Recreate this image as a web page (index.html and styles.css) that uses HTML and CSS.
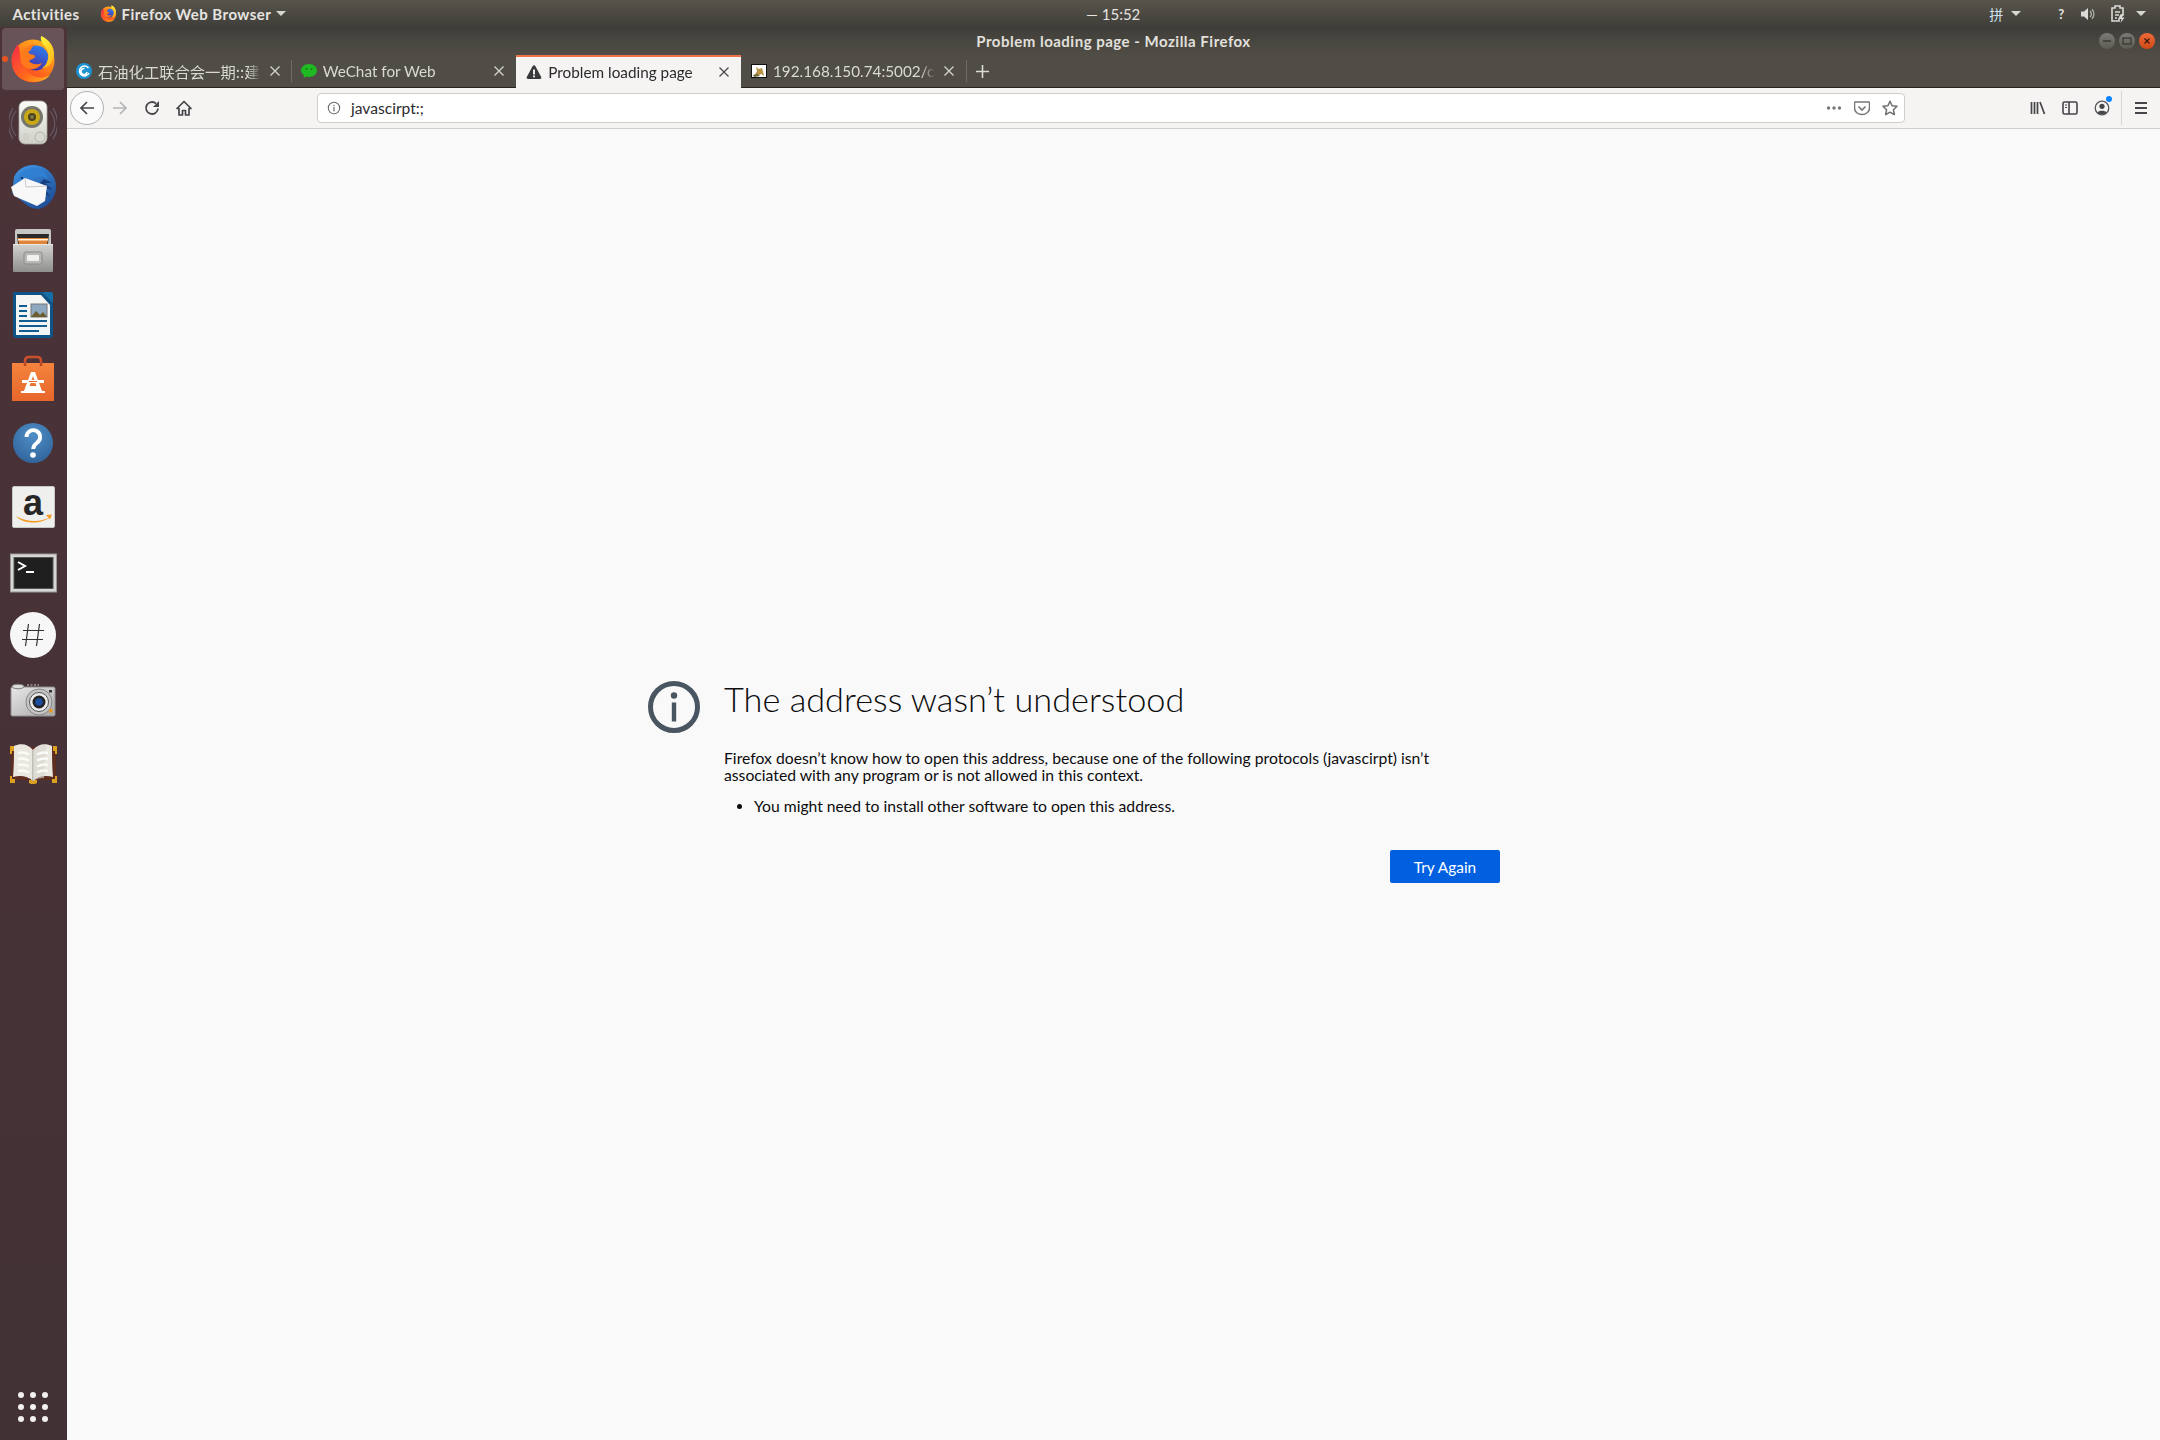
FILE: index.html
```html
<!DOCTYPE html>
<html lang="en">
<head>
<meta charset="utf-8">
<title>Problem loading page - Mozilla Firefox</title>
<link rel="stylesheet" href="styles.css">
</head>
<body>
<svg class="defs" aria-hidden="true">
  <defs>
    <linearGradient id="ffBody" x1="0.85" y1="0.1" x2="0.3" y2="1"><stop offset="0" stop-color="#ffb020"/><stop offset="0.5" stop-color="#ff7a18"/><stop offset="1" stop-color="#f9302c"/></linearGradient>
    <linearGradient id="ffLeft" x1="0" y1="0" x2="1" y2="1"><stop offset="0" stop-color="#f6284a"/><stop offset="0.6" stop-color="#ff6a1a"/><stop offset="1" stop-color="#ffb51f"/></linearGradient>
    <linearGradient id="ffGlobe" x1="0.7" y1="0" x2="0.3" y2="1"><stop offset="0" stop-color="#2d7ff0"/><stop offset="1" stop-color="#4a2aa0"/></linearGradient>
    <linearGradient id="ffTail" x1="0.2" y1="0" x2="0.8" y2="1"><stop offset="0" stop-color="#fff23a"/><stop offset="1" stop-color="#ffb31a"/></linearGradient>
    <linearGradient id="bagG" x1="0" y1="0" x2="0" y2="1"><stop offset="0" stop-color="#f3843e"/><stop offset="1" stop-color="#e8662a"/></linearGradient>
    <linearGradient id="metalG" x1="0" y1="0" x2="0" y2="1"><stop offset="0" stop-color="#d2d2d0"/><stop offset="1" stop-color="#8f8f8d"/></linearGradient>
    <linearGradient id="camG" x1="0" y1="0" x2="1" y2="1"><stop offset="0" stop-color="#e8e8e8"/><stop offset="1" stop-color="#a8a8a8"/></linearGradient>
    <linearGradient id="spkG" x1="0" y1="0" x2="0" y2="1"><stop offset="0" stop-color="#fbfbf8"/><stop offset="1" stop-color="#cfcfc8"/></linearGradient>
    <linearGradient id="birdG" x1="0.2" y1="0" x2="0.8" y2="1"><stop offset="0" stop-color="#3f93e4"/><stop offset="1" stop-color="#1c4a92"/></linearGradient>
    <radialGradient id="helpG" cx="0.5" cy="0.3" r="0.8"><stop offset="0" stop-color="#4f8fc6"/><stop offset="1" stop-color="#2c5f96"/></radialGradient>
    <symbol id="firefox" viewBox="0 0 48 48">
      <circle cx="24" cy="26" r="21.500" fill="url(#ffBody)"/>
      <path d="M9 9C3 16 1.500 26 4 33c3 9 11 14 20 14 9 0 14-3 17-7-7 4-15 3-21-2-6-5-8-12-3-17-3 0-5 1-6 2 0-4 0-9-2-14z" fill="url(#ffLeft)"/>
      <circle cx="27" cy="23" r="12.500" fill="url(#ffGlobe)"/>
      <path d="M15 15c3-4 8-6 12-6-3 2-5 4-5 6-3 1-3 3-1 4 3 1 6 1 5 3-1 2-4 2-6 4 3 4 9 4 13 2-3 6-11 8-17 4-6-4-6-12-1-17z" fill="#ff7a1c"/>
      <path d="M32 1c-1 5 2 8 5 12 3 4 3 9 1 14-1 3-3 5-5 6 6 0 11-5 12-12C46 12 40 4 32 1z" fill="url(#ffTail)"/>
    </symbol>
  </defs>
</svg>

<header class="topbar">
  <div class="top-left">
    <span class="top-label activities">Activities</span>
    <span class="top-app">
      <svg class="top-ff"><use href="#firefox"/></svg>
      <span class="top-label">Firefox Web Browser</span>
      <span class="caret"></span>
    </span>
  </div>
  <div class="clock">— 15:52</div>
  <div class="top-right">
    <span class="tray-pin">拼</span><span class="caret caret-pin"></span>
    <span class="tray-q">?</span>
    <svg class="tray-vol" viewBox="0 0 16 16"><path d="M1 5.500h3L8 2v12l-4-3.500H1z" fill="#dcdad6"/><path d="M10 5a4 4 0 0 1 0 6M12 3.200a7 7 0 0 1 0 9.600" fill="none" stroke="#dcdad6" stroke-width="1.300" opacity=".7"/></svg>
    <svg class="tray-clip" viewBox="0 0 16 18"><path d="M2 3h3V1h5v2h3v7h-2l-2 4v2H2z" fill="none" stroke="#dcdad6" stroke-width="1.600"/><path d="M5 7h5M5 10h4M5 13h2" stroke="#dcdad6" stroke-width="1.400"/><path d="M12 9l-3 5h2.500l-1 4 4-5.500h-2.500l1.500-3.500z" fill="#dcdad6"/></svg>
    <span class="caret caret-end"></span>
  </div>
</header>

<div class="desktop">
  <nav class="dock">
    <div class="dock-item active">
      <span class="run-dot"></span>
      <svg class="dock-icon"><use href="#firefox"/></svg>
    </div>
    <div class="dock-item">
      <svg class="dock-icon" viewBox="0 0 48 48">
        <path d="M7 12C1 20 1 29 7 37M41 12c6 8 6 17 0 25M4 9c-6 10-6 21 0 31M44 9c6 10 6 21 0 31" fill="none" stroke="#7a7486" stroke-width="1.200" opacity=".6"/>
        <rect x="10" y="2" width="28" height="43" rx="6" fill="url(#spkG)" stroke="#aaa9a2" stroke-width=".8"/>
        <circle cx="23" cy="18" r="11" fill="#77766c"/>
        <circle cx="23" cy="18" r="8" fill="#c9a815"/>
        <circle cx="23" cy="18" r="4" fill="#4b4326"/>
        <circle cx="23" cy="18" r="1.800" fill="#8c8240"/>
        <circle cx="31" cy="38" r="5" fill="#d8d8d2" stroke="#b5b5ae"/>
        <rect x="15" y="35" width="4" height="5" rx="1" fill="none" stroke="#c8c8c0"/>
      </svg>
    </div>
    <div class="dock-item">
      <svg class="dock-icon" viewBox="0 0 48 48">
        <path d="M24 2c12 0 23 9 23 22 0 11-9 21-18 22-3 0-7-1-10-3L3 30 5 14C8 7 15 2 24 2z" fill="url(#birdG)"/>
        <path d="M35 16l8 4-7 0 8 7-8-2 5 9-7-5 2 9-6-7-3 7V24z" fill="#173e80"/>
        <path d="M8 20C9 10 17 4 25 5c7 1 12 5 14 11-5-3-10-3-14-2-6 1-12 3-17 6z" fill="#2f7fd2"/>
        <circle cx="13" cy="15" r="1.100" fill="#0c2348"/>
        <path d="M2 24l14-9 22 8-2 15-8 5L5 33z" fill="#f8f8f8"/>
        <path d="M16 15l1 9 21-1" fill="none" stroke="#c3c8ce" stroke-width="1"/>
      </svg>
    </div>
    <div class="dock-item">
      <svg class="dock-icon" viewBox="0 0 48 48">
        <path d="M6 4q0-2 2-2h32q2 0 2 2v16H6z" fill="#c6c6c4"/>
        <path d="M8 7h32l-1 10H9z" fill="#2c2a28"/>
        <path d="M9 11h30l-1 7H10z" fill="#e0843a"/>
        <path d="M9 12h30v1.500H9z" fill="#fff1d8"/>
        <path d="M4 17h40v27q0 1-1 1H5q-1 0-1-1z" fill="url(#metalG)"/>
        <path d="M4 17h40v1H4z" fill="#e8e8e6"/>
        <rect x="15" y="25" width="18" height="12" rx="2" fill="#b8b8b6" stroke="#8a8a88"/>
        <rect x="18" y="28" width="12" height="6" rx="1" fill="#f0f0ee"/>
      </svg>
    </div>
    <div class="dock-item">
      <svg class="dock-icon" viewBox="0 0 48 48">
        <path d="M4 1h29l11 11v32q0 3-3 3H7q-3 0-3-3z" fill="#0f5486"/>
        <path d="M33 1h9q2 0 2 2v9z" fill="#1670a8"/>
        <path d="M7 4h25l9 10v30H7z" fill="#f4f5f5"/>
        <path d="M10 15h8M10 20h8M10 25h8M10 30h28M10 35h28M10 40h20" stroke="#125d92" stroke-width="2"/>
        <rect x="22" y="13" width="16" height="13" fill="#8da7be" stroke="#777"/>
        <path d="M22 26l5-6 4 4 3-3 4 5z" fill="#6c5d30"/>
      </svg>
    </div>
    <div class="dock-item">
      <svg class="dock-icon" viewBox="0 0 48 48">
        <path d="M16 11V6q0-4 4-4h8q4 0 4 4v5" fill="none" stroke="#c9502a" stroke-width="2.500"/>
        <path d="M3 8h42v38H3z" fill="url(#bagG)"/>
        <path d="M16 11v-3M32 11v-3" stroke="#b8461f" stroke-width="2.500"/>
        <path d="M22 17h4l7 19h3v2H12v-2h3zM24 21l-3.500 10h7z" fill="#fff" fill-rule="evenodd"/>
        <rect x="13" y="25" width="22" height="3" fill="#fff"/>
        <rect x="20" y="26" width="8" height="1" fill="#e8662a"/>
      </svg>
    </div>
    <div class="dock-item">
      <svg class="dock-icon" viewBox="0 0 48 48">
        <circle cx="24" cy="24" r="20" fill="url(#helpG)"/>
        <path d="M17.500 18a6.800 6.800 0 1 1 10.500 5.700c-2.700 1.900-3.800 3-3.800 6.300" fill="none" stroke="#fff" stroke-width="3.800"/>
        <circle cx="24" cy="36" r="2.800" fill="#fff"/>
      </svg>
    </div>
    <div class="dock-item">
      <svg class="dock-icon" viewBox="0 0 48 48">
        <rect x="3.500" y="3.500" width="42" height="41" rx="1.500" fill="#efefee" stroke="#c8c8c6"/>
        <text class="amazon-a" x="24" y="32" text-anchor="middle">a</text>
        <path d="M7 33c10 6 24 7 34 1-7 7-27 8-34-1z" fill="#f59a23"/>
        <path d="M37 32l6-.500-2 5z" fill="#f59a23"/>
      </svg>
    </div>
    <div class="dock-item">
      <svg class="dock-icon" viewBox="0 0 48 48">
        <rect x="1.500" y="7" width="46" height="38" fill="#d6d6d4" stroke="#999"/>
        <rect x="5" y="10.500" width="39" height="31" fill="#1f1f1f" stroke="#555"/>
        <path d="M9 15l7 4-7 4" fill="none" stroke="#fff" stroke-width="2"/>
        <rect x="17" y="24" width="8" height="2" fill="#fff"/>
      </svg>
    </div>
    <div class="dock-item">
      <svg class="dock-icon" viewBox="0 0 48 48">
        <circle cx="24" cy="24" r="23" fill="#f7f7f7"/>
        <path d="M19.500 13l-3 22M30.500 13l-3 22M14 19.500h21M13 28.500h21" stroke="#333" stroke-width="1.200" fill="none"/>
      </svg>
    </div>
    <div class="dock-item">
      <svg class="dock-icon" viewBox="0 0 48 48">
        <rect x="2" y="12" width="44" height="29" rx="1.500" fill="url(#camG)" stroke="#8f8f8f"/>
        <ellipse cx="9" cy="11.500" rx="6" ry="2.300" fill="#dcdcdc" stroke="#777"/>
        <path d="M18 10h12" stroke="#999" stroke-dasharray="2 1.500" stroke-width="1.500"/>
        <circle cx="30" cy="27" r="13" fill="#c4c4c4" stroke="#888"/>
        <circle cx="30" cy="27" r="9.500" fill="#ececec" stroke="#555"/>
        <circle cx="30" cy="27" r="6.500" fill="#222"/>
        <circle cx="30" cy="27" r="3.800" fill="#1c4da0"/>
        <rect x="40" y="34" width="3.500" height="3.500" fill="#e39a28"/>
        <rect x="40" y="15" width="3" height="2.500" fill="#333"/>
      </svg>
    </div>
    <div class="dock-item">
      <svg class="dock-icon" viewBox="0 0 48 48">
        <rect x="2" y="8" width="45" height="33" fill="#5d2d20"/>
        <path d="M1 7h4v5H3v3H1zM48 7h-4v5h2v3h2zM1 37h2v3h3v4H1zM48 37h-2v3h-3v4h5zM20 41h8v3l-2 1h-4l-2-1z" fill="#dd9f1e"/>
        <path d="M24 11C19 5 12 4 5 7c0 10 0 20-1 31 7-2 15-1 20 4 5-5 13-6 20-4-1-11-1-21-1-31-7-3-14-2-19 4z" fill="#e9e7e0"/>
        <path d="M24 11v31" stroke="#97948a"/>
        <path d="M24 11c4-4 9-5 13-5l-2 33c-4 0-8 1-11 3z" fill="#d9d6cd" opacity=".6"/>
        <path d="M9 14c4-1 8 0 11 1.500M9 20c4-1 8 0 11 1.500M9 26c4-1 8 0 11 1.500M9 32c4-1 8 0 11 1.500M39 14c-4-1-8 0-11 1.500M39 20c-4-1-8 0-11 1.500M39 26c-4-1-8 0-11 1.500M39 32c-4-1-8 0-11 1.500" stroke="#fafaf6" stroke-width="2.500" fill="none"/>
      </svg>
    </div>
    <div class="dock-apps">
      <i></i><i></i><i></i><i></i><i></i><i></i><i></i><i></i><i></i>
    </div>
  </nav>

  <div class="browser">
    <div class="titlebar">
      <span></span>
      <div class="win-title">Problem loading page - Mozilla Firefox</div>
      <div class="win-btns">
        <span class="win-btn"><svg viewBox="0 0 16 16"><path d="M4 8h8" stroke="#38362f" stroke-width="1.400"/></svg></span>
        <span class="win-btn"><svg viewBox="0 0 16 16"><rect x="4" y="5" width="8" height="6" fill="none" stroke="#38362f" stroke-width="1.200"/></svg></span>
        <span class="win-btn close"><svg viewBox="0 0 16 16"><path d="M5.500 5.500l5 5M10.500 5.500l-5 5" stroke="#3b1a0d" stroke-width="1.300"/></svg></span>
      </div>
    </div>

    <div class="tabstrip">
      <div class="tab sep">
        <svg class="favicon" viewBox="0 0 16 16"><circle cx="8" cy="8" r="8" fill="#1c92d2"/><path d="M12.500 5A5 5 0 1 0 13 10M11 9a3 3 0 1 1-2.500-3.500" fill="none" stroke="#fff" stroke-width="1.500"/></svg>
        <span class="tab-label cjk">石油化工联合会一期::建筑</span>
        <svg class="tab-close" viewBox="0 0 16 16"><path d="M3.500 3.500l9 9M12.500 3.500l-9 9" stroke="#d6d4d0" stroke-width="1.300"/></svg>
      </div>
      <div class="tab">
        <svg class="favicon" viewBox="0 0 16 16"><path d="M8 1c4.400 0 8 2.900 8 6.500S12.400 14 8 14c-1 0-2-.2-2.800-.4L2.500 15l.6-2.800C1.200 11 0 9.400 0 7.500 0 3.900 3.600 1 8 1z" fill="#1fb922"/><circle cx="5.500" cy="6" r="1" fill="#137d18"/><circle cx="10.500" cy="6" r="1" fill="#137d18"/></svg>
        <span class="tab-label">WeChat for Web</span>
        <svg class="tab-close" viewBox="0 0 16 16"><path d="M3.500 3.500l9 9M12.500 3.500l-9 9" stroke="#d6d4d0" stroke-width="1.300"/></svg>
      </div>
      <div class="tab selected">
        <svg class="favicon" viewBox="0 0 16 16"><path d="M8 1.200c.5 0 1 .3 1.300.8l5.900 11c.5 1-.2 2-1.300 2H2.100c-1.100 0-1.800-1-1.300-2l5.900-11c.3-.5.800-.8 1.300-.8z" fill="#38383d"/><rect x="7.100" y="5.500" width="1.800" height="5" fill="#fff"/><rect x="7.100" y="11.500" width="1.800" height="1.800" fill="#fff"/></svg>
        <span class="tab-label">Problem loading page</span>
        <svg class="tab-close" viewBox="0 0 16 16"><path d="M3.500 3.500l9 9M12.500 3.500l-9 9" stroke="#4a4a4f" stroke-width="1.300"/></svg>
      </div>
      <div class="tab">
        <svg class="favicon" viewBox="0 0 16 16"><rect x=".5" y="1.500" width="15" height="13" fill="#fff" stroke="#111"/><path d="M3 13l3-5-1-4 3 2 3-1 1 3 1 5-3-2-3 2z" fill="#b89448"/><path d="M2 12l4-1 3 2-6 1z" fill="#6d6a3a"/></svg>
        <span class="tab-label">192.168.150.74:5002/cpc</span>
        <svg class="tab-close" viewBox="0 0 16 16"><path d="M3.500 3.500l9 9M12.500 3.500l-9 9" stroke="#d6d4d0" stroke-width="1.300"/></svg>
      </div>
      <div class="new-tab">
        <svg viewBox="0 0 16 16"><path d="M8 1v14M1 8h14" stroke="#dcdad6" stroke-width="1.700"/></svg>
      </div>
    </div>

    <div class="toolbar">
      <div class="nav-back">
        <svg viewBox="0 0 16 16"><path d="M15 8H2M8 2L2 8l6 6" fill="none" stroke="#45454a" stroke-width="1.700"/></svg>
      </div>
      <div class="tool">
        <svg viewBox="0 0 16 16"><path d="M1 8h13M8 2l6 6-6 6" fill="none" stroke="#b4b4b6" stroke-width="1.700"/></svg>
      </div>
      <div class="tool">
        <svg viewBox="0 0 16 16"><path d="M14 8.500A6 6 0 1 1 12 3.500" fill="none" stroke="#45454a" stroke-width="1.800"/><path d="M15 1v6H9z" fill="#45454a"/></svg>
      </div>
      <div class="tool">
        <svg viewBox="0 0 16 16"><path d="M8 1.500L1 8.500h2V15h3.500v-4.500h3V15H13V8.500h2z" fill="none" stroke="#45454a" stroke-width="1.700" stroke-linejoin="round"/></svg>
      </div>
      <div class="urlbar">
        <svg class="url-info" viewBox="0 0 16 16"><circle cx="8" cy="8" r="6.500" fill="none" stroke="#6a6a6e" stroke-width="1.200"/><rect x="7.300" y="7" width="1.400" height="4.800" fill="#6a6a6e"/><rect x="7.300" y="4.400" width="1.400" height="1.500" fill="#6a6a6e"/></svg>
        <span class="url-text">javascirpt:;</span>
        <div class="url-actions">
          <svg class="url-act" viewBox="0 0 16 16"><circle cx="2.500" cy="8" r="1.700" fill="#77777a"/><circle cx="8" cy="8" r="1.700" fill="#77777a"/><circle cx="13.500" cy="8" r="1.700" fill="#77777a"/></svg>
          <svg class="url-act" viewBox="0 0 16 16"><path d="M1 2h14q.5 0 .5.500V8c0 4-3.500 6.500-7.500 6.500S.5 12 .5 8V2.500Q.5 2 1 2z" fill="none" stroke="#77777a" stroke-width="1.500"/><path d="M4.500 6.500L8 10l3.500-3.500" fill="none" stroke="#77777a" stroke-width="1.700"/></svg>
          <svg class="url-act star" viewBox="0 0 16 16"><path d="M8 1.200l2.100 4.500 4.900.6-3.600 3.400.9 4.900L8 12.200l-4.300 2.400.9-4.900L1 6.300l4.900-.6z" fill="none" stroke="#6e6e72" stroke-width="1.500" stroke-linejoin="round"/></svg>
        </div>
      </div>
      <div class="tool">
        <svg viewBox="0 0 16 16"><path d="M1.500 2v12M4.500 2v12M7.500 2v12M10 2l4.500 12" fill="none" stroke="#45454a" stroke-width="1.700"/></svg>
      </div>
      <div class="tool">
        <svg viewBox="0 0 16 16"><rect x="1" y="2" width="14" height="12" rx="1.500" fill="none" stroke="#45454a" stroke-width="1.600"/><path d="M7 2v12" stroke="#45454a" stroke-width="1.600"/><path d="M3 5h2M3 7.500h2" stroke="#45454a" stroke-width="1"/></svg>
      </div>
      <div class="tool account">
        <svg viewBox="0 0 16 16"><circle cx="8" cy="8" r="6.800" fill="none" stroke="#55555a" stroke-width="1.300"/><circle cx="8" cy="6.300" r="2.600" fill="#45454a"/><path d="M3.500 12.500c1-2.500 8-2.500 9 0-2 2-7 2-9 0z" fill="#45454a"/></svg>
        <span class="badge"></span>
      </div>
      <div class="tool-sep"></div>
      <div class="tool">
        <svg viewBox="0 0 16 16"><path d="M2 3h12M2 8h12M2 13h12" stroke="#45454a" stroke-width="1.800"/></svg>
      </div>
    </div>

    <main class="page">
      <svg class="err-icon" viewBox="0 0 52 52"><circle cx="26" cy="26" r="23.500" fill="none" stroke="#4a5562" stroke-width="5"/><circle cx="26" cy="14.500" r="3.200" fill="#4a5562"/><rect x="23.800" y="21.500" width="4.400" height="19" fill="#4a5562"/></svg>
      <div class="err-body">
        <h1 class="err-title">The address wasn’t understood</h1>
        <p class="err-text">Firefox doesn’t know how to open this address, because one of the following protocols (javascirpt) isn’t associated with any program or is not allowed in this context.</p>
        <ul class="err-list"><li>You might need to install other software to open this address.</li></ul>
        <div class="err-actions"><button class="btn-primary">Try Again</button></div>
      </div>
    </main>
  </div>
</div>
</body>
</html>
```

FILE: styles.css
```css
* { box-sizing: border-box; }
html, body { margin: 0; padding: 0; height: 100%; }
body {
  width: 2160px;
  height: 1440px;
  overflow: hidden;
  display: flex;
  flex-direction: column;
  font-family: "Lato", "Noto Sans CJK SC", sans-serif;
  background: #f9f9fa;
}
.defs { position: absolute; width: 0; height: 0; overflow: hidden; }

/* top panel */
.topbar {
  height: 27px;
  flex: none;
  display: grid;
  grid-template-columns: 1086px auto 1fr;
  align-items: center;
  background: linear-gradient(#57544c, #403e39);
  color: #e6e4e0;
  font-size: 15px;
  font-weight: 700;
}
.top-left { display: flex; align-items: center; padding-left: 12.500px; }
.activities { margin-right: 20px; }
.top-app { display: flex; align-items: center; }
.top-ff { width: 17px; height: 17px; margin-right: 5px; }
.top-label { letter-spacing: .45px; }
.caret {
  display: inline-block;
  width: 0;
  height: 0;
  border-left: 5px solid transparent;
  border-right: 5px solid transparent;
  border-top: 5px solid #d8d6d2;
  margin-left: 5px;
}
.clock { font-weight: 400; }
.top-right { display: flex; align-items: center; padding-left: 849px; }
.tray-pin { width: 16px; font-size: 14px; font-weight: 400; font-family: "Noto Sans CJK SC", sans-serif; color: #cfe0f0; }
.caret-pin { margin-left: 6px; }
.tray-q { margin-left: 37px; font-size: 13px; width: 10px; }
.tray-vol { width: 16px; height: 16px; margin-left: 12px; }
.tray-clip { width: 16px; height: 18px; margin-left: 14px; }
.caret-end { margin-left: 10px; }

.desktop { flex: 1; display: flex; min-height: 0; }

/* dock */
.dock {
  width: 67px;
  flex: none;
  display: flex;
  flex-direction: column;
  align-items: center;
  padding-right: 1px;
  background: linear-gradient(#4c3338, #413135);
}
.dock-item {
  position: relative;
  width: 62px;
  height: 64px;
  flex: none;
  display: flex;
  align-items: center;
  justify-content: center;
}
.dock-item.active { background: rgba(255,255,255,.16); border-radius: 4px; height: 62px; margin: 1px 0; }
.dock-icon { width: 48px; height: 48px; display: block; }
.amazon-a { font-family: "Liberation Sans", sans-serif; font-weight: 700; font-size: 36px; fill: #262626; }
.run-dot { position: absolute; left: 0; top: 28px; width: 6px; height: 6px; border-radius: 50%; background: #e95420; }
.dock-apps {
  margin-top: auto;
  margin-bottom: 18px;
  display: grid;
  grid-template-columns: repeat(3, 6px);
  gap: 6px;
}
.dock-apps i { width: 6px; height: 6px; border-radius: 50%; background: #f2f0f0; }

/* window chrome */
.browser { flex: 1; min-width: 0; display: flex; flex-direction: column; }
.titlebar {
  height: 28px;
  flex: none;
  display: grid;
  grid-template-columns: 1fr auto 1fr;
  align-items: center;
  background: linear-gradient(#403e39, #504d46);
}
.win-title { color: #e2e0dc; font-size: 15px; font-weight: 700; letter-spacing: .5px; padding-bottom: 1px; }
.win-btns { display: flex; gap: 4px; justify-content: flex-end; padding-right: 5px; }
.win-btn { width: 16px; height: 16px; border-radius: 50%; background: linear-gradient(#7c7a74, #5c5a54); display: block; }
.win-btn svg { display: block; width: 16px; height: 16px; }
.win-btn.close { background: linear-gradient(#f0693a, #d04a18); }

.tabstrip {
  height: 33px;
  flex: none;
  display: flex;
  background: #504d46;
  border-bottom: 1px solid #26251f;
}
.tab {
  width: 224.67px;
  flex: none;
  display: flex;
  align-items: center;
  gap: 6px;
  padding: 0 9px 0 9px;
  color: #dad8d4;
  font-size: 15.300px;
  position: relative;
}
.tab.selected, .tab.selected + .tab { padding-left: 10px; }
.tab.sep::after { content: ""; position: absolute; right: 0; top: 5px; bottom: 5px; width: 1px; background: #6f6c65; }
.tab.selected {
  background: #f5f4f3;
  color: #2b2b2e;
  border-top: 2px solid #f0724a;
  height: 33px;
  padding-bottom: 2px;
}
.favicon { width: 16px; height: 16px; flex: none; }
.tab-label {
  flex: 1;
  min-width: 0;
  white-space: nowrap;
  overflow: hidden;
  -webkit-mask-image: linear-gradient(90deg, #000 92%, transparent);
  mask-image: linear-gradient(90deg, #000 92%, transparent);
}
.cjk { font-family: "Noto Sans CJK SC", sans-serif; }
.tab-close { width: 16px; height: 16px; flex: none; }
.new-tab { width: 33px; display: flex; align-items: center; justify-content: center; border-left: 1px solid #6f6c65; margin: 5px 0; }
.new-tab svg { width: 15px; height: 15px; }

.toolbar {
  height: 41px;
  flex: none;
  display: flex;
  align-items: center;
  padding: 0 3px 1px;
  background: #f5f4f3;
  border-bottom: 1px solid #cfcdca;
}
.nav-back {
  width: 34px;
  height: 34px;
  border-radius: 50%;
  border: 1px solid #b1b1b3;
  background: #fbfbfb;
  display: flex;
  align-items: center;
  justify-content: center;
  flex: none;
}
.nav-back svg { width: 16px; height: 16px; }
.tool { width: 32px; height: 32px; flex: none; display: flex; align-items: center; justify-content: center; position: relative; }
.tool svg { width: 16px; height: 16px; }
.account .badge { position: absolute; top: 4px; right: 6px; width: 6px; height: 6px; border-radius: 50%; background: #0a84ff; }
.tool-sep { width: 1px; height: 34px; background: #d8d7d4; margin: 0 3px; flex: none; }
.urlbar {
  flex: 1;
  min-width: 0;
  margin: 0 117px 0 117px;
  height: 30px;
  display: flex;
  align-items: center;
  background: #fff;
  border: 1px solid #cfcecb;
  border-radius: 4px;
  padding: 0 3px 0 9px;
}
.url-info { width: 14px; height: 14px; flex: none; }
.url-text { margin-left: 10px; font-size: 15.600px; color: #2b2b2e; flex: 1; }
.url-actions { display: flex; align-items: center; gap: 12px; padding-right: 3px; }
.url-act { width: 16px; height: 16px; display: block; }

/* error page */
.page {
  flex: 1;
  min-height: 0;
  display: flex;
  align-items: flex-start;
  gap: 24px;
  padding: 552px 0 0 581px;
  background: #f9f9fa;
  color: #0c0c0d;
}
.err-icon { width: 52px; height: 52px; flex: none; }
.err-body { width: 776px; }
.err-title { margin: 0; font-size: 34.300px; line-height: 36px; font-weight: 300; color: #0c0c0d; }
.err-text { margin: 32px 0 0; font-size: 15.720px; line-height: 17px; }
.err-list { margin: 15px 0 0; padding: 0 0 0 30px; font-size: 15.700px; line-height: 17px; }
.err-actions { display: flex; justify-content: flex-end; margin-top: 35px; }
.btn-primary {
  width: 110px;
  height: 33px;
  border: 0;
  border-radius: 2px;
  background: #0060df;
  color: #fff;
  font: 400 15.400px "Lato", sans-serif;
}
```
